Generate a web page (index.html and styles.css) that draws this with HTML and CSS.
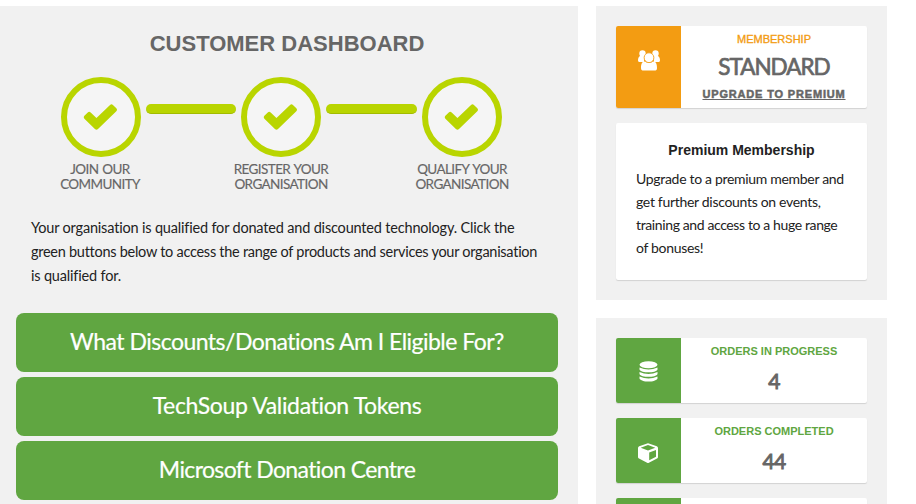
FILE: index.html
```html
<!DOCTYPE html>
<html lang="en">
<head>
<meta charset="utf-8">
<title>Customer Dashboard</title>
<link rel="stylesheet" href="styles.css">
</head>
<body>
<svg class="sprite" aria-hidden="true">
  <symbol id="check" viewBox="0 0 36 28"><path d="M1.3 12.3 4.8 8.8Q6.3 7.5 7.8 8.8L13.8 14.4 27.9 1Q29.4-.4 30.9 1L34.4 4.4Q35.8 5.9 34.4 7.4L15.4 25.9Q13.8 27.3 12.2 25.9L1.3 15.3Q0 13.8 1.3 12.3Z"/></symbol>
</svg>
<div class="page">
  <main class="panel dashboard">
    <h1>CUSTOMER DASHBOARD</h1>
    <div class="steps">
      <div class="step"><div class="circle"><svg><use href="#check"/></svg></div><p class="s1">JOIN OUR<br>COMMUNITY</p></div>
      <div class="bar"></div>
      <div class="step"><div class="circle"><svg><use href="#check"/></svg></div><p class="s2">REGISTER YOUR<br>ORGANISATION</p></div>
      <div class="bar bar-last"></div>
      <div class="step"><div class="circle"><svg><use href="#check"/></svg></div><p class="s3">QUALIFY YOUR<br>ORGANISATION</p></div>
    </div>
    <p class="intro">Your organisation is qualified for donated and discounted technology. Click the<br><span class="tight">green buttons below to access the range of products and services your organisation</span><br>is qualified for.</p>
    <div class="buttons">
      <a class="b1">What Discounts/Donations Am I Eligible For?</a>
      <a class="b2">TechSoup Validation Tokens</a>
      <a class="b3">Microsoft Donation Centre</a>
    </div>
  </main>
  <aside class="side">
    <section class="panel membership">
      <div class="card level">
        <div class="icon orange">
          <svg width="22" height="21" viewBox="0 0 22 21"><circle cx="4.5" cy="3.5" r="3.200"/><circle cx="17.5" cy="3.5" r="3.200"/><path d="M2 6C.6 6.800 0 8.500 0 10.500Q.2 12 1.5 12H6V6ZM20 6C21.4 6.800 22 8.500 22 10.500Q21.800 12 20.500 12H16V6Z"/><path d="M3 18C3 14 4 11.500 6.500 11.500Q11 14 15.500 11.500C18 11.500 19 14 19 18Q19 20.600 16.500 20.600H5.500Q3 20.600 3 18Z"/><circle class="edge" cx="11" cy="7.700" r="4.900"/></svg>
        </div>
        <div class="info"><h2>MEMBERSHIP</h2><strong class="plan">STANDARD</strong><a class="upgrade">UPGRADE TO PREMIUM</a></div>
      </div>
      <div class="card offer">
        <h3>Premium Membership</h3>
        <p>Upgrade to a premium member and<br>get further discounts on events,<br><span class="tight">training and access to a huge range</span><br>of bonuses!</p>
      </div>
    </section>
    <section class="panel orders">
      <div class="card order">
        <div class="icon green">
          <svg width="19" height="21" viewBox="0 0 19 21"><ellipse cx="9.500" cy="3.800" rx="9" ry="3.500"/><path d="M.5 6.500Q9.500 10.700 18.500 6.500V8.500C17 12.300 2 12.300.5 8.500ZM.5 11Q9.500 15.200 18.500 11V13C17 16.800 2 16.800.5 13ZM.5 15.500Q9.500 19.700 18.500 15.500V17.500C17 21.600 2 21.600.5 17.500Z"/></svg>
        </div>
        <div class="info"><h2>ORDERS IN PROGRESS</h2><strong class="count">4</strong></div>
      </div>
      <div class="card order">
        <div class="icon green">
          <svg class="cube" width="20" height="20" viewBox="0 0 20 20"><path fill-rule="evenodd" d="M9.200.4Q10 .1 10.800.4L18.800 3.300Q20 3.800 20 5V14Q20 15 19 15.600L10.900 19.700Q10 20.100 9.100 19.700L1 15.600Q0 15 0 14V5Q0 3.800 1.200 3.300ZM10 2 2.700 4.700 10 7.500 17.300 4.700ZM11.200 9.500V17.200L18 13.800V6.900Z"/></svg>
        </div>
        <div class="info"><h2>ORDERS COMPLETED</h2><strong class="count">44</strong></div>
      </div>
      <div class="card order"><div class="icon green"></div></div>
    </section>
  </aside>
</div>
</body>
</html>
```
FILE: styles.css
```css
* { box-sizing: border-box; }
body { margin: 0; background: #fff; color: #222; font-family: Lato, sans-serif; overflow: hidden; }
h1, h2, h3, p { margin: 0; font-family: "Liberation Sans", sans-serif; white-space: nowrap; }
p { font-family: Lato, sans-serif; }
.sprite { display: none; }
.page { display: flex; gap: 18px; height: 504px; padding-top: 6px; overflow: hidden; }
.panel { background: #f1f1f1; }
.dashboard { width: 578px; height: 498px; padding-top: 24px; }
h1 { padding-right: 4px; text-align: center; color: #666; font-size: 22px; line-height: 27px; }
.steps { display: flex; gap: 5px; padding: 20px 0 0 61px; }
.step { width: 80px; }
.circle { display: flex; align-items: center; justify-content: center; height: 80px; border: 6px solid #b9d500; border-radius: 50%; background: #f5f5f5; }
.circle svg { width: 35px; height: 27px; margin-right: 1px; fill: #b9d500; }
.step p { margin: 5px -15px 0; text-align: center; color: #666; font-size: 13.5px; line-height: 15px; letter-spacing: -.6px; word-spacing: 1px; -webkit-text-stroke: .15px #666; }
.step .s1 { margin-left: -15px; margin-right: -13px; }
.bar { width: 90px; height: 10px; margin-top: 27px; border-radius: 5px; background: #b9d500; border-bottom: 1px solid #a2bb00; }
.bar-last { width: 91px; }
.intro { padding: 24px 0 0 31px; font-size: 14.5px; line-height: 24px; letter-spacing: -.18px; }
.intro .tight { letter-spacing: -.27px; }
.buttons { display: flex; flex-direction: column; gap: 5px; padding: 25px 20px 0 16px; }
.buttons a { height: 59px; border-radius: 8px; background: #60a641; color: #fff; text-align: center; font-size: 23px; line-height: 57px; letter-spacing: -.52px; -webkit-text-stroke: .2px #fff; }
.buttons .b2 { letter-spacing: -.35px; }
.buttons .b3 { letter-spacing: -.62px; }
.side { width: 291px; display: flex; flex-direction: column; gap: 18px; }
.side .panel { padding: 20px; }
.membership { height: 294px; flex: none; }
.card { background: #fff; border-radius: 2px; box-shadow: 0 1px 1px rgba(0,0,0,.13); }
.level, .order { display: flex; overflow: hidden; }
.level { height: 82px; }
.icon { width: 65px; display: flex; justify-content: center; fill: #fff; }
.orange { background: #f39c12; padding-top: 24px; }
.green { background: #60a641; padding-top: 23px; }
.cube { margin: 2px 2px 0 0; }
.edge { stroke: #f39c12; stroke-width: .8; }
.info { flex: 1; display: flex; flex-direction: column; align-items: center; }
h2 { color: #60a641; font-size: 11px; line-height: 13px; padding-top: 7px; }
.level h2 { color: #f39c12; font-weight: 400; -webkit-text-stroke: .35px #f39c12; }
.plan { margin-top: 6px; color: #666; font-size: 22.5px; font-weight: 400; line-height: 29px; letter-spacing: -1px; -webkit-text-stroke: .7px #666; }
.upgrade { margin-top: 6px; color: #666; font: 900 11px/14px "Liberation Sans", sans-serif; letter-spacing: .83px; -webkit-text-stroke: .5px #666; text-decoration: underline; }
.offer { height: 157px; margin-top: 15px; padding: 18px 20px; }
h3 { text-align: center; font-size: 14px; line-height: 18px; }
.offer p { margin-top: 8px; font-size: 14px; line-height: 23px; letter-spacing: -.31px; }
.offer .tight { letter-spacing: -.38px; }
.orders { display: flex; flex-direction: column; gap: 15px; }
.order { height: 65px; flex: none; }
.count { margin-top: 9px; color: #666; font-size: 21px; font-weight: 400; line-height: 28px; letter-spacing: -.7px; -webkit-text-stroke: .9px #666; }
```
